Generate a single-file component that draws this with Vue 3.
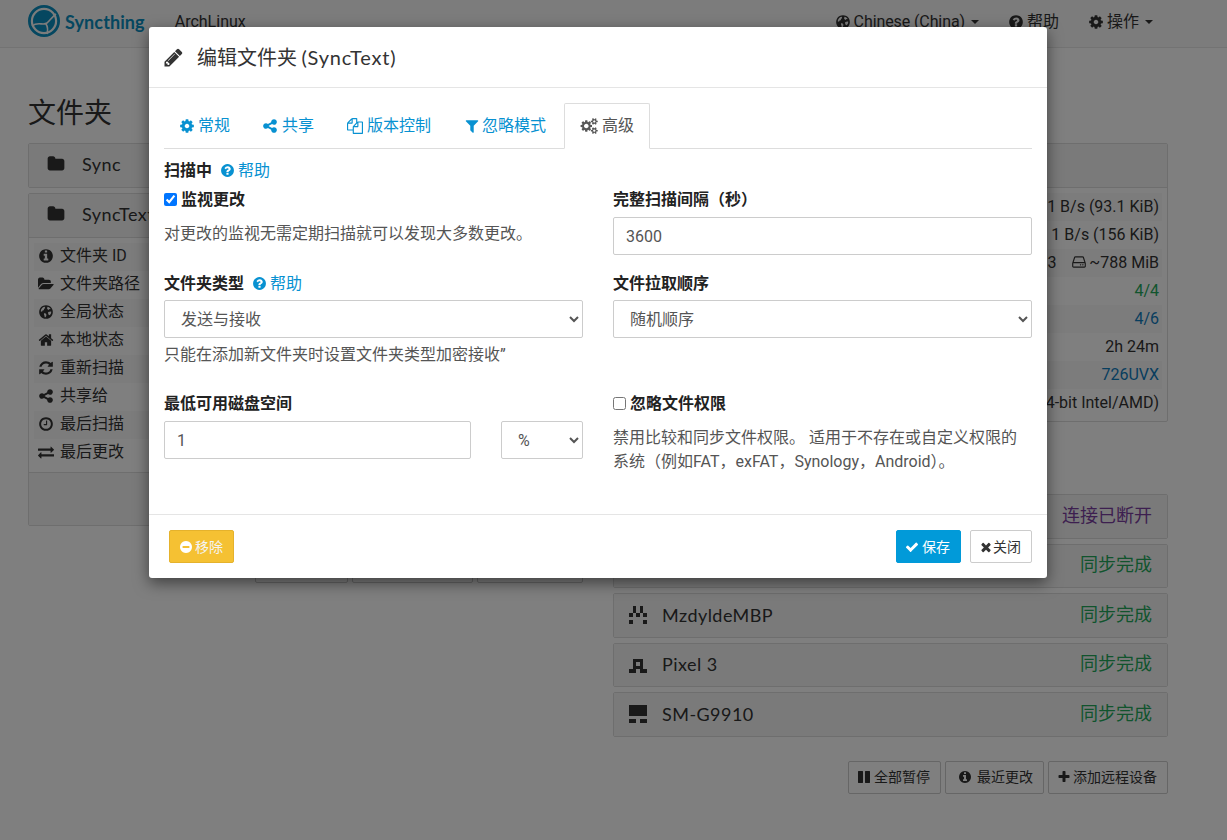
<script setup>
import { h } from 'vue'

const P = {
  pencil: 'M491 1536l91-91-235-235-91 91v107h128v128h107zm523-928q0-22-22-22-10 0-17 7l-542 542q-7 7-7 17 0 22 22 22 10 0 17-7l542-542q7-7 7-17zm-54-192l416 416-832 832h-416v-416zm683 96q0 53-37 90l-166 166-416-416 166-165q36-38 90-38 53 0 91 38l235 234q37 39 37 91z',
  cog: 'M1152 896q0-106-75-181t-181-75-181 75-75 181 75 181 181 75 181-75 75-181zm512-109v222q0 12-8 23t-20 13l-185 28q-19 54-39 91 35 50 107 138 10 12 10 25t-9 23q-27 37-99 108t-94 71q-12 0-26-9l-138-108q-44 23-91 38-16 136-29 186-7 28-36 28h-222q-14 0-24.500-8.500t-11.500-21.500l-28-184q-49-16-90-37l-141 107q-10 9-25 9-14 0-25-11-126-114-165-168-7-10-7-23 0-12 8-23 15-21 51-66.500t54-70.500q-27-50-41-99l-183-27q-13-2-21-12.500t-8-23.500v-222q0-12 8-23t19-13l186-28q14-46 39-92-40-57-107-138-10-12-10-24 0-10 9-23 26-36 98.500-107.500t94.500-71.500q13 0 26 10l138 107q44-23 91-38 16-136 29-186 7-28 36-28h222q14 0 24.500 8.500t11.500 21.500l28 184q49 16 90 37l142-107q9-9 24-9 13 0 25 10 129 119 165 170 7 8 7 22 0 12-8 23-15 21-51 66.500t-54 70.500q26 50 41 98l183 28q13 2 21 12.500t8 23.500z',
  share: 'M1344 1024q133 0 226.500 93.500t93.500 226.500-93.500 226.500-226.500 93.500-226.500-93.500-93.500-226.500q0-12 2-34l-360-180q-92 86-218 86-133 0-226.500-93.500t-93.500-226.500 93.500-226.500 226.500-93.500q126 0 218 86l360-180q-2-22-2-34 0-133 93.500-226.500t226.500-93.500 226.500 93.500 93.500 226.500-93.500 226.500-226.500 93.500q-126 0-218-86l-360 180q2 22 2 34t-2 34l360 180q92-86 218-86z',
  files: 'M1696 384q40 0 68 28t28 68v1216q0 40-28 68t-68 28h-960q-40 0-68-28t-28-68v-288h-544q-40 0-68-28t-28-68v-672q0-40 20-88t48-76l408-408q28-28 76-48t88-20h416q40 0 68 28t28 68v328q68-40 128-40h416zm-544 213l-299 299h299v-299zm-640-384l-299 299h299v-299zm196 647l316-316v-416h-384v416q0 40-28 68t-68 28h-416v640h512v-256q0-40 20-88t48-76zm956 804v-1152h-384v416q0 40-28 68t-68 28h-416v640h896z',
  filter: 'M1595 295q17 41-14 70l-493 493v742q0 42-39 59-13 5-25 5-27 0-45-19l-256-256q-19-19-19-45v-486l-493-493q-31-29-14-70 17-39 59-39h1280q42 0 59 39z',
  cogs: 'M960 896q0-106-75-181t-181-75-181 75-75 181 75 181 181 75 181-75 75-181zm768 512q0-52-38-90t-90-38-90 38-38 90q0 53 37.500 90.500t90.500 37.500 90.500-37.500 37.500-90.500zm0-1024q0-52-38-90t-90-38-90 38-38 90q0 53 37.500 90.500t90.500 37.500 90.500-37.500 37.500-90.500zm-384 421v185q0 10-7 19.500t-16 10.500l-155 24q-11 35-32 76 34 48 90 115 7 11 7 20 0 12-7 19-23 30-82.500 89.500t-78.500 59.500q-11 0-21-7l-115-90q-37 19-77 31-11 108-23 155-7 24-30 24h-186q-11 0-20-7.500t-10-17.500l-23-153q-34-10-75-31l-118 89q-7 7-20 7-11 0-21-8-144-133-144-160 0-9 7-19 10-14 41-53t47-61q-23-44-35-82l-152-24q-10-1-17-9.500t-7-19.500v-185q0-10 7-19.500t16-10.500l155-24q11-35 32-76-34-48-90-115-7-11-7-20 0-12 7-20 22-30 82-89t79-59q11 0 21 7l115 90q34-18 77-32 11-108 23-154 7-24 30-24h186q11 0 20 7.500t10 17.500l23 153q34 10 75 31l118-89q8-7 20-7 11 0 21 8 144 133 144 160 0 8-7 19-12 16-42 54t-45 60q23 48 34 82l152 23q10 2 17 10.500t7 19.500zm640 533v140q0 16-149 31-12 27-30 52 51 113 51 138 0 4-4 7-122 71-124 71-8 0-46-47t-52-68q-20 2-30 2t-30-2q-14 21-52 68t-46 47q-2 0-124-71-4-3-4-7 0-25 51-138-18-25-30-52-149-15-149-31v-140q0-16 149-31 13-29 30-52-51-113-51-138 0-4 4-7 4-2 35-20t59-34 30-16q8 0 46 46.500t52 67.500q20-2 30-2t30 2q51-71 92-112l6-2q4 0 124 70 4 3 4 7 0 25-51 138 17 23 30 52 149 15 149 31zm0-1024v140q0 16-149 31-12 27-30 52 51 113 51 138 0 4-4 7-122 71-124 71-8 0-46-47t-52-68q-20 2-30 2t-30-2q-14 21-52 68t-46 47q-2 0-124-71-4-3-4-7 0-25 51-138-18-25-30-52-149-15-149-31v-140q0-16 149-31 13-29 30-52-51-113-51-138 0-4 4-7 4-2 35-20t59-34 30-16q8 0 46 46.500t52 67.500q20-2 30-2t30 2q51-71 92-112l6-2q4 0 124 70 4 3 4 7 0 25-51 138 17 23 30 52 149 15 149 31z',
  question: 'M1024 1376v-192q0-14-9-23t-23-9h-192q-14 0-23 9t-9 23v192q0 14 9 23t23 9h192q14 0 23-9t9-23zm256-672q0-88-55.500-163t-138.500-116-170-41q-243 0-371 213-15 24 8 42l132 100q7 6 19 6 16 0 25-12 53-68 86-92 34-24 86-24 48 0 85.500 26t37.500 59q0 38-20 61t-68 45q-63 28-115.500 86.500t-52.500 125.500v36q0 14 9 23t23 9h192q14 0 23-9t9-23q0-19 21.500-49.500t54.500-49.500q32-18 49-28.500t46-35 44.500-48 28-60.500 12.500-81zm384 192q0 209-103 385.500t-279.500 279.500-385.500 103-385.500-103-279.500-279.500-103-385.500 103-385.500 279.500-279.500 385.500-103 385.500 103 279.500 279.500 103 385.500z',
  info: 'M1152 1376v-160q0-14-9-23t-23-9h-96v-512q0-14-9-23t-23-9h-320q-14 0-23 9t-9 23v160q0 14 9 23t23 9h96v320h-96q-14 0-23 9t-9 23v160q0 14 9 23t23 9h448q14 0 23-9t9-23zm-128-896v-160q0-14-9-23t-23-9h-192q-14 0-23 9t-9 23v160q0 14 9 23t23 9h192q14 0 23-9t9-23zm640 416q0 209-103 385.500t-279.500 279.500-385.500 103-385.500-103-279.500-279.500-103-385.500 103-385.500 279.500-279.500 385.500-103 385.500 103 279.500 279.500 103 385.500z',
  folder: 'M1728 608v704q0 92-66 158t-158 66h-1216q-92 0-158-66t-66-158v-960q0-92 66-158t158-66h320q92 0 158 66t66 158v32h672q92 0 158 66t66 158z',
  open: 'M1879 952q0 31-31 66l-336 396q-43 51-120.500 86.500t-143.500 35.500h-1088q-34 0-60.500-13t-26.500-43q0-31 31-66l336-396q43-51 120.500-86.500t143.500-35.500h1088q34 0 60.500 13t26.500 43zm-343-344v160h-832q-94 0-197 47.500t-164 119.500l-337 396-5 6q0-4-.5-12.500t-.5-12.500v-960q0-92 66-158t158-66h320q92 0 158 66t66 158v32h544q92 0 158 66t66 158z',
  home: 'M1472 992v480q0 26-19 45t-45 19h-384v-384h-256v384h-384q-26 0-45-19t-19-45v-480q0-1 .5-3t.5-3l575-474 575 474q1 2 1 6zm223-69l-62 74q-8 9-21 11h-3q-13 0-21-7l-692-577-692 577q-12 8-24 7-13-2-21-11l-62-74q-8-10-7-23.500t11-21.500l719-599q32-26 76-26t76 26l244 204v-195q0-14 9-23t23-9h192q14 0 23 9t9 23v408l219 182q10 8 11 21.500t-7 23.500z',
  refresh: 'M1639 1056q0 5-1 7-64 268-268 434.500t-478 166.500q-146 0-282.500-55t-243.500-157l-129 129q-19 19-45 19t-45-19-19-45v-448q0-26 19-45t45-19h448q26 0 45 19t19 45-19 45l-137 137q71 66 161 102t187 36q134 0 250-65t186-179q11-17 53-117 8-23 30-23h192q13 0 22.500 9.500t9.500 22.500zm25-800v448q0 26-19 45t-45 19h-448q-26 0-45-19t-19-45 19-45l138-138q-148-137-349-137-134 0-250 65t-186 179q-11 17-53 117-8 23-30 23h-199q-13 0-22.500-9.500t-9.500-22.500v-7q65-268 270-434.500t480-166.500q146 0 284 55.500t245 156.500l130-129q19-19 45-19t45 19 19 45z',
  clock: 'M1024 544v448q0 14-9 23t-23 9h-320q-14 0-23-9t-9-23v-64q0-14 9-23t23-9h224v-352q0-14 9-23t23-9h64q14 0 23 9t9 23zm416 352q0-148-73-273t-198-198-273-73-273 73-198 198-73 273 73 273 198 198 273 73 273-73 198-198 73-273zm224 0q0 209-103 385.500t-279.500 279.500-385.500 103-385.500-103-279.500-279.500-103-385.500 103-385.500 279.500-279.500 385.500-103 385.500 103 279.500 279.500 103 385.500z',
  exchange: 'M1792 1184v192q0 13-9.500 22.500t-22.500 9.500h-1376v192q0 13-9.500 22.500t-22.500 9.500q-12 0-24-10l-319-320q-9-9-9-22 0-14 9-23l320-320q9-9 23-9 13 0 22.500 9.500t9.500 22.500v192h1376q13 0 22.500 9.500t9.500 22.500zm0-544q0 14-9 23l-320 320q-9 9-23 9-13 0-22.500-9.500t-9.500-22.500v-192h-1376q-13 0-22.500-9.500t-9.500-22.500v-192q0-13 9.500-22.500t22.500-9.500h1376v-192q0-14 9-23t23-9q12 0 24 10l319 319q9 9 9 23z',
  globe: 'M896 128a768 768 0 1 0 .1 0zM500 420q120-100 260-110l40 130-120 120-40 130-130 40-60 130-150-60q40-220 200-380zM1080 320q200 50 330 210l-60 60-90-20-60 90-130-60-60-130zM1150 900l260-60q50 10 80 30q-10 230-180 400l-120-60-60-170zM700 1000l160 60 90 130-50 200-110 120q-60-30-60-200l-60-130z',
  minus: 'M1344 960v-128q0-26-19-45t-45-19h-768q-26 0-45 19t-19 45v128q0 26 19 45t45 19h768q26 0 45-19t19-45zm320-64q0 209-103 385.500t-279.500 279.500-385.500 103-385.500-103-279.500-279.500-103-385.500 103-385.500 279.500-279.500 385.500-103 385.500 103 279.500 279.500 103 385.500z',
  check: 'M1671 566q0 40-28 68l-724 724-136 136q-28 28-68 28t-68-28l-136-136-362-362q-28-28-28-68t28-68l136-136q28-28 68-28t68 28l294 295 656-657q28-28 68-28t68 28l136 136q28 28 28 68z',
  times: 'M1490 1322q0 40-28 68l-136 136q-28 28-68 28t-68-28l-294-294-294 294q-28 28-68 28t-68-28l-136-136q-28-28-28-68t28-68l294-294-294-294q-28-28-28-68t28-68l136-136q28-28 68-28t68 28l294 294 294-294q28-28 68-28t68 28l136 136q28 28 28 68t-28 68l-294 294 294 294q28 28 28 68z',
  pause: 'M1664 192v1408q0 26-19 45t-45 19h-512q-26 0-45-19t-19-45v-1408q0-26 19-45t45-19h512q26 0 45 19t19 45zm-896 0v1408q0 26-19 45t-45 19h-512q-26 0-45-19t-19-45v-1408q0-26 19-45t45-19h512q26 0 45 19t19 45z',
  plus: 'M1600 736v192q0 40-28 68t-68 28h-416v416q0 40-28 68t-68 28h-192q-40 0-68-28t-28-68v-416h-416q-40 0-68-28t-28-68v-192q0-40 28-68t68-28h416v-416q0-40 28-68t68-28h192q40 0 68 28t28 68v416h416q40 0 68 28t28 68z',
  hdd: 'M1040 1216q0 33-23.500 56.500t-56.500 23.500-56.500-23.500-23.500-56.500 23.500-56.500 56.500-23.500 56.500 23.500 23.500 56.500zm256 0q0 33-23.500 56.500t-56.500 23.500-56.500-23.500-23.500-56.500 23.500-56.500 56.500-23.500 56.500 23.500 23.500 56.500zm128 160v-320q0-13-9.500-22.500t-22.500-9.500h-1216q-13 0-22.500 9.500t-9.500 22.500v320q0 13 9.500 22.500t22.500 9.500h1216q13 0 22.500-9.500t9.500-22.500zm-1230-480h1180l-157-482q-4-13-16-21.500t-26-8.500h-782q-14 0-26 8.500t-16 21.500zm1358 160v320q0 66-47 113t-113 47h-1216q-66 0-113-47t-47-113v-320q0-25 16-75l197-606q17-53 63-86t101-33h782q55 0 101 33t63 86l197 606q16 50 16 75z'
}
const WIDE = { cogs: 2048, open: 1920 }

const Fa = (props) => h('svg', {
  class: 'fa',
  viewBox: `0 0 ${WIDE[props.n] || 1792} 1792`,
  fill: 'currentColor',
  'fill-rule': props.n === 'globe' ? 'evenodd' : 'nonzero',
  'aria-hidden': 'true'
}, [h('path', { d: P[props.n] })])
Fa.props = ['n']

const Identicon = (props) => h('svg', {
  class: 'identicon', viewBox: '0 0 5 5', 'shape-rendering': 'crispEdges', fill: '#333'
}, props.cells.map(([r, c]) => h('rect', { x: c, y: r, width: 1.02, height: 1.02 })))
Identicon.props = ['cells']

const rc = (rows) => rows.flatMap((cols, r) => cols.map((c) => [r, c]))

const tabs = [
  { icon: 'cog', label: '常规', w: 16, ml: -1, mr: 3 },
  { icon: 'share', label: '共享', w: 16, ml: -2, mr: 4 },
  { icon: 'files', label: '版本控制', w: 16, ml: -1, mr: 4 },
  { icon: 'filter', label: '忽略模式', w: 16, ml: -1, mr: 2 },
  { icon: 'cogs', label: '高级', w: 18.3, ml: 0, mr: 3.7, active: true }
]

const folderRows = [
  ['info', '文件夹 ID'], ['open', '文件夹路径'], ['globe', '全局状态'], ['home', '本地状态'],
  ['refresh', '重新扫描'], ['share', '共享给'], ['clock', '最后扫描'], ['exchange', '最后更改']
]

const devices = [
  { name: '', status: '连接已断开', cls: 'purple', cells: rc([[0, 4], [1, 3], [2], [1, 3], [0, 4]]) },
  { name: '', status: '同步完成', cls: 'green', cells: rc([[2], [1, 3], [0, 2, 4], [1, 3], [2]]) },
  { name: 'MzdyldeMBP', status: '同步完成', cls: 'green', cells: rc([[1, 3], [1, 3], [0, 2, 4], [], [0, 4]]) },
  { name: 'Pixel 3', status: '同步完成', cls: 'green', cells: rc([[], [1, 2, 3], [1, 3], [1, 2, 3], [0, 1, 3, 4]]) },
  { name: 'SM-G9910', status: '同步完成', cls: 'green', cells: rc([[0, 1, 2, 3, 4], [0, 1, 2, 3, 4], [0, 1, 2, 3, 4], [], [0, 1, 3, 4]]) }
]
</script>

<template>
  <div class="page">
    <header class="navbar">
      <svg class="logo" viewBox="0 0 32 32" aria-hidden="true">
        <circle cx="16" cy="16" r="14.6" fill="none" stroke="#0a8fc0" stroke-width="2.8" />
        <circle cx="16" cy="16" r="11" fill="#0a8fc0" />
        <path d="M4 21 C10 16 15 21 19 18 C22 15.500 24 12 28 9 M18 19 C20 22 20 25 19 29" fill="none" stroke="#f8f8f8" stroke-width="1.6" />
      </svg>
      <span class="brand">Syncthing</span>
      <span class="host">ArchLinux</span>
      <nav class="nav-right">
        <span class="nav-item lang"><Fa n="globe" />Chinese (China)<i class="caret"></i></span>
        <span class="nav-item"><Fa n="question" />帮助</span>
        <span class="nav-item"><Fa n="cog" />操作<i class="caret"></i></span>
      </nav>
    </header>

    <main class="columns">
      <section>
        <h3>文件夹</h3>
        <div class="panel">
          <div class="panel-heading"><Fa n="folder" class="head-fa" /><span class="panel-title">Sync</span></div>
        </div>
        <div class="panel">
          <div class="panel-heading"><Fa n="folder" class="head-fa" /><span class="panel-title">SyncText</span></div>
          <div class="panel-body folder-rows">
            <div v-for="r in folderRows" :key="r[1]" class="row">
              <Fa :n="r[0]" /><span class="row-label">{{ r[1] }}</span>
            </div>
          </div>
          <div class="panel-footer"></div>
        </div>
        <div class="actions">
          <button class="btn"><Fa n="pause" />全部暂停</button>
          <button class="btn"><Fa n="refresh" />全部重新扫描</button>
          <button class="btn"><Fa n="plus" class="plus" />添加文件夹</button>
        </div>
      </section>

      <section>
        <div class="panel this-device">
          <div class="panel-heading"></div>
          <div class="panel-body">
            <div class="row"><span class="val">1 B/s (93.1 KiB)</span></div>
            <div class="row"><span class="val">1 B/s (156 KiB)</span></div>
            <div class="row"><span class="val">383 <Fa n="hdd" class="hdd" />~788 MiB</span></div>
            <div class="row"><span class="val green">4/4</span></div>
            <div class="row"><span class="val blue">4/6</span></div>
            <div class="row"><span class="val">2h 24m</span></div>
            <div class="row"><span class="val blue">726UVX</span></div>
            <div class="row"><span class="val">Linux (64-bit Intel/AMD)</span></div>
          </div>
        </div>
        <div class="devices-gap"></div>
        <div v-for="(d, i) in devices" :key="i" class="panel">
          <div class="panel-heading device">
            <Identicon :cells="d.cells" />
            <span class="panel-title">{{ d.name }}</span>
            <span class="status" :class="d.cls">{{ d.status }}</span>
          </div>
        </div>
        <div class="actions">
          <button class="btn"><Fa n="pause" />全部暂停</button>
          <button class="btn"><Fa n="info" class="recent" />最近更改</button>
          <button class="btn"><Fa n="plus" class="plus" />添加远程设备</button>
        </div>
      </section>
    </main>

    <div class="backdrop">
      <div class="modal" role="dialog">
        <div class="modal-header">
          <Fa n="pencil" class="title-fa" />
          <h4>编辑文件夹 <span class="latin">(SyncText)</span></h4>
        </div>
        <div class="modal-body">
          <ul class="tabs">
            <li v-for="t in tabs" :key="t.label" class="tab" :class="{ active: t.active }">
              <Fa :n="t.icon" :style="{ width: t.w + 'px', marginLeft: t.ml + 'px', marginRight: t.mr + 'px' }" />{{ t.label }}
            </li>
          </ul>

          <div class="scan-title"><b>扫描中</b><a class="help"><Fa n="question" />帮助</a></div>

          <div class="form-row r1">
            <div>
              <label class="check"><input type="checkbox" checked /><b>监视更改</b></label>
              <p class="hint h1">对更改的监视无需定期扫描就可以发现大多数更改。</p>
            </div>
            <div>
              <label class="lbl">完整扫描间隔（秒）</label>
              <input class="control" type="text" value="3600" />
            </div>
          </div>

          <div class="form-row r2">
            <div>
              <label class="lbl">文件夹类型<a class="help"><Fa n="question" />帮助</a></label>
              <select class="control"><option>发送与接收</option></select>
              <p class="hint h2">只能在添加新文件夹时设置文件夹类型加密接收”</p>
            </div>
            <div>
              <label class="lbl">文件拉取顺序</label>
              <select class="control"><option>随机顺序</option></select>
            </div>
          </div>

          <div class="form-row r3">
            <div>
              <label class="lbl">最低可用磁盘空间</label>
              <div class="space">
                <input class="control" type="text" value="1" />
                <select class="control"><option>%</option></select>
              </div>
            </div>
            <div>
              <label class="check"><input type="checkbox" /><b>忽略文件权限</b></label>
              <p class="hint h1">禁用比较和同步文件权限。 适用于不存在或自定义权限的系统（例如FAT，exFAT，Synology，Android）。</p>
            </div>
          </div>
        </div>
        <div class="modal-footer">
          <button class="btn warn"><Fa n="minus" />移除</button>
          <span class="spacer"></span>
          <button class="btn save"><Fa n="check" />保存</button>
          <button class="btn close"><Fa n="times" />关闭</button>
        </div>
      </div>
    </div>
  </div>
</template>

<style>
html, body { margin: 0; height: 100%; overflow: hidden; background: #fff; }
</style>

<style scoped>
.page {
  position: relative;
  height: 840px;
  overflow: hidden;
  background: #fff;
  color: #333;
  font: 16px/24px Roboto, "Noto Sans CJK SC", sans-serif;
}
.fa { width: 16px; height: 16px; flex: none; display: inline-block; vertical-align: -2px; }

.navbar {
  display: flex;
  align-items: center;
  height: 47px;
  padding: 0 74px 0 28px;
  background: #f8f8f8;
  border-bottom: 1px solid #e7e7e7;
}
.logo { width: 32px; height: 32px; margin-top: -5px; }
.brand { margin: -4px 0 0 5px; font: 700 18px/24px Lato, sans-serif; color: #0a8fc0; letter-spacing: .1px; }
.host { margin: -4px 0 0 30px; }
.nav-right { display: flex; margin: -4px 0 0 auto; }
.nav-item { display: flex; align-items: center; gap: 3px; margin-left: 29px; }
.lang { letter-spacing: -.1px; }
.caret {
  width: 0; height: 0; margin-left: 3px;
  border: 4px solid transparent; border-top-color: #333; border-bottom: 0;
}

.columns {
  display: grid;
  grid-template-columns: 555px 555px;
  gap: 30px;
  padding: 0 59px 0 28px;
}
h3 { margin: 51px 0 14px; font: 400 28px/30px Roboto, "Noto Sans CJK SC", sans-serif; }
.this-device { margin-top: 95px; }
.devices-gap { height: 67px; }

.panel { margin-bottom: 5px; border: 1px solid #ddd; border-radius: 2px; background: #fff; }
.panel-heading {
  display: flex; align-items: center;
  box-sizing: border-box; height: 44px; padding: 0 15px 3px 18px;
  background: #f5f5f5; border-bottom: 1px solid #ddd;
}
.panel > .panel-heading:only-child { height: 42.500px; border-bottom: 0; }
.head-fa { width: 18px; height: 18px; margin-right: 17px; }
.panel-title { font: 400 18px/22px Lato, "Noto Sans CJK SC", sans-serif; letter-spacing: .45px; white-space: nowrap; }
.panel-body { padding: 5px; }
.this-device .panel-body { padding-bottom: 4px; }
.row {
  display: flex; align-items: center; justify-content: flex-end;
  height: 28px; padding: 0 3px 0 4px; box-sizing: border-box; line-height: 28px;
}
.folder-rows .row { justify-content: flex-start; padding-bottom: 1px; }
.row:nth-child(odd) { background: #f9f9f9; }
.row > .fa { margin-right: 6px; }
.row-label { flex: 1; white-space: nowrap; }
.val { white-space: nowrap; }
.hdd { margin: 0 1px 0 12px; }
.panel-footer { height: 53px; background: #f5f5f5; border-top: 1px solid #ddd; box-sizing: border-box; }
.green { color: #22a95b; }
.blue { color: #0f7cbd; }
.purple { color: #7b3fa0; }

.device { padding-left: 15px; padding-bottom: 1px; }
.identicon { width: 18px; height: 18px; margin-right: 15px; flex: none; }
.status { margin-left: auto; font: 400 18px/24px Roboto, "Noto Sans CJK SC", sans-serif; }

.actions { display: flex; justify-content: flex-end; gap: 4px; margin-top: 24px; }
.btn {
  display: inline-flex; align-items: center; justify-content: flex-start;
  box-sizing: border-box; height: 33px; padding: 0 10px 0 8px;
  background: #fff; color: #333;
  border: 1px solid #ccc; border-radius: 2px;
  font: 14px/20px Roboto, "Noto Sans CJK SC", sans-serif;
  white-space: nowrap;
}
.btn .fa { width: 14px; height: 14px; margin-right: 3px; }
.btn .plus { margin-right: 2px; }
.btn .recent { margin: 0 5px 0 4px; }

.backdrop {
  position: absolute; inset: 0;
  display: flex; align-items: flex-start;
  padding: 27px 0 0 149px;
  background: rgba(0, 0, 0, .5);
}
.modal {
  width: 898px;
  background: #fff;
  border-radius: 3px;
  box-shadow: 0 5px 15px rgba(0, 0, 0, .5);
}
.modal-header {
  display: flex; align-items: center;
  height: 61px; box-sizing: border-box; padding: 0 15px;
  border-bottom: 1px solid #e5e5e5;
}
.title-fa { width: 21px; height: 21px; margin: 0 13px 0 -1px; }
h4 { margin: 0; font: 400 20px/30px "Noto Sans CJK SC", sans-serif; }
.latin { font-family: Lato, sans-serif; letter-spacing: .8px; }
.modal-body { padding: 15px 15px 40px; }

.tabs {
  display: flex; margin: 0; padding: 0; list-style: none;
  height: 45px; border-bottom: 1px solid #ddd;
}
.tab {
  display: flex; align-items: center;
  box-sizing: border-box; height: 46px; padding: 0 15px; margin-right: 2px;
  color: #0891d1; border: 1px solid transparent;
  border-radius: 2px 2px 0 0;
}
.tab.active { color: #555; background: #fff; border-color: #ddd #ddd #fff; }

.scan-title { margin-top: 10px; }
b { font-weight: 700; color: #222; }
.help { color: #0891d1; margin-left: 8px; font-weight: 400; }
.help .fa { margin-right: 3px; width: 15px; height: 15px; }

.form-row { display: grid; grid-template-columns: 419px 419px; gap: 30px; }
.r1 { margin-top: 5px; }
.r2 { margin-top: 17px; }
.r3 { margin-top: 25px; }
.lbl { display: block; font-weight: 700; color: #222; margin-bottom: 5px; }
.r2 .lbl { margin-bottom: 4px; }
.check { display: flex; align-items: center; height: 24px; }
.check input { width: 13px; height: 13px; margin: 0 4px 0 0; position: relative; top: -1px; }
.hint { margin: 0; color: #555; }
.h1 { margin-top: 10px; }
.h2 { margin-top: 5px; }
.control {
  display: block; box-sizing: border-box; width: 100%; height: 38px;
  padding: 0 12px; background: #fff; color: #555;
  border: 1px solid #ccc; border-radius: 2px;
  font: 16px/24px Roboto, "Noto Sans CJK SC", sans-serif;
  outline: 0;
}
.space { display: grid; grid-template-columns: 307px 82px; gap: 30px; }

.modal-footer {
  display: flex; align-items: center; gap: 9px;
  padding: 15px; border-top: 1px solid #e5e5e5;
}
.spacer { flex: 1; }
.warn { margin-left: 5px; padding-left: 9px; background: #f5c133; border-color: #e5b22c; color: #f4f4f4; width: 65px; }
.warn .fa { color: #fff; margin-right: 2px; }
.save { background: #019ad9; border-color: #019ad9; color: #fff; width: 65px; }
.close { width: 62px; }
.close .fa { margin-right: 0; }
</style>
